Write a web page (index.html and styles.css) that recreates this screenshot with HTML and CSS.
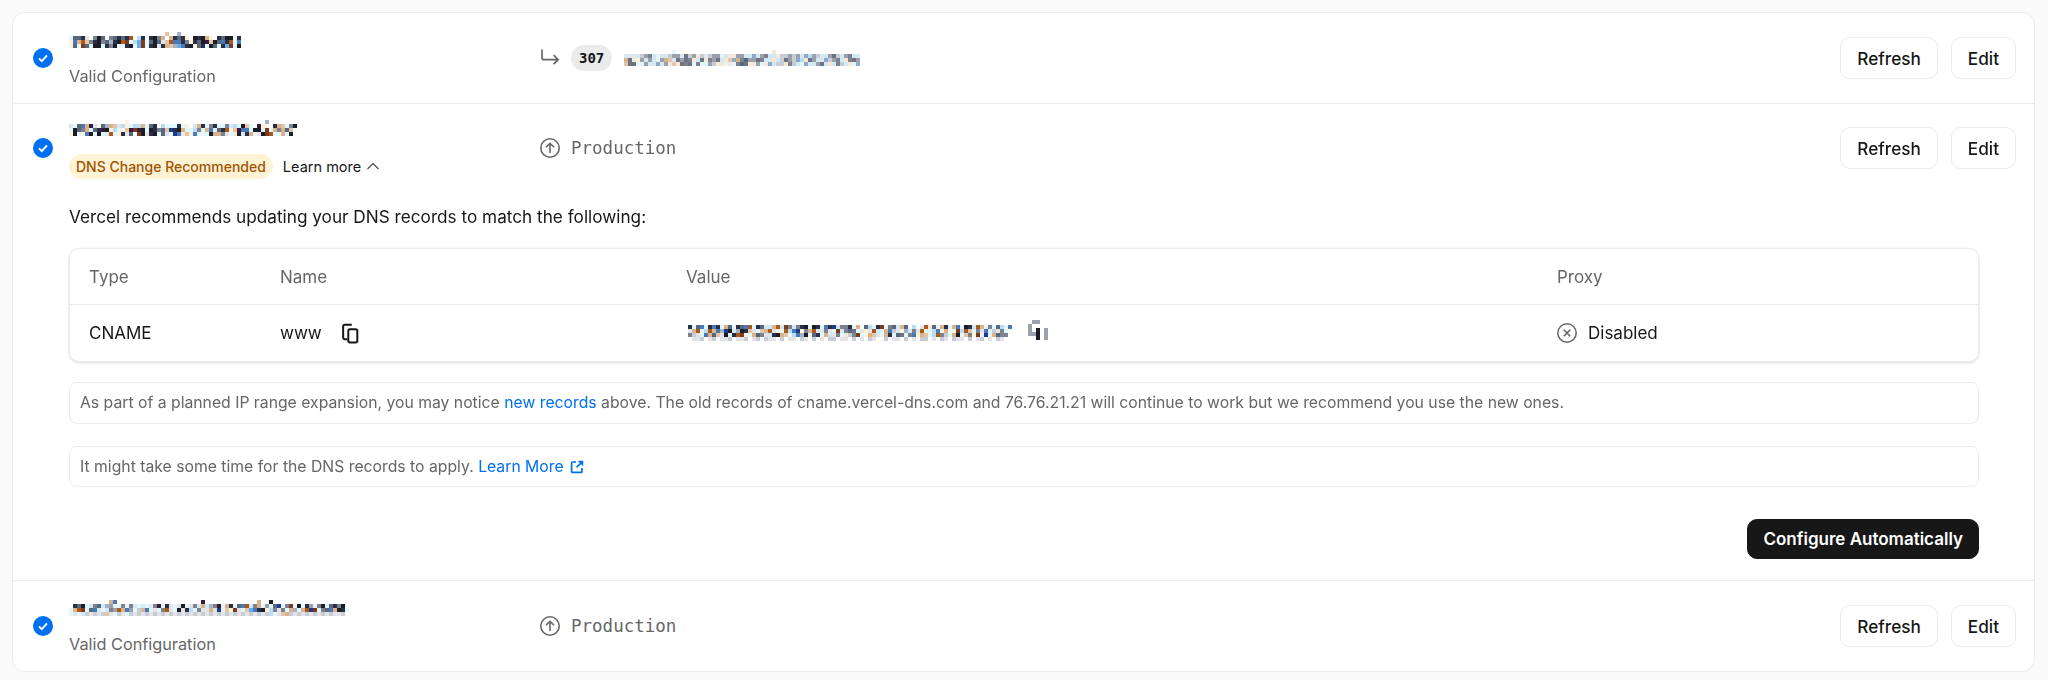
FILE: index.html
```html
<!DOCTYPE html>
<html lang="en">
  <head>
    <meta charset="UTF-8" />
    <title>Domains</title>
    <link rel="stylesheet" href="styles.css">
  </head>
  <body>
    <div class="card">
      <div class="row">
        <div class="row_head">
          <svg class="check" viewBox="0 0 20 20"><circle cx="10" cy="10" r="10" fill="#0070f3"/><path d="M6 10.4l2.8 2.7L14 7.4" fill="none" stroke="#fff" stroke-width="2"/></svg>
          <div class="domain">
            <canvas class="blur" data-rows="cssdp.gks.gsdsdo.ld.dkgt.tdsdy.kdkty.dskkcd|ybtoegdkgsxdkorclwrcskspeobbdgydskmeksbdocb|yscrsckkcdgkccdkcwrcdkpdtexwbdkysdckscdwrck" data-top="........................e..x"></canvas>
            <span class="sub">Valid Configuration</span>
          </div>
          <div class="target">
            <svg class="target_icon" viewBox="0 0 20 20"><path d="M2 1.5v8.2c0 1.3.8 2 2 2h14M13.6 7.2l4.6 4.5-4.6 4.5" fill="none" stroke="#666" stroke-width="1.7"/></svg>
            <span class="code">307</span>
            <canvas class="blur" data-rows="aapaihgacaaihhavihfipihhcaffhhaauahgaafiihihaulhiaahviahgaa|tvfyhahachteavhvgfavfghvafeutgshhvgaafaivhiulfvhaauihgafgvh|evvcchaauahfefvgvcgcchiffcfcgsvffhcfuaiifgiacuaahvafagiafcu" data-top="............c........................f"></canvas>
          </div>
          <div class="actions">
            <button type="button">Refresh</button>
            <button type="button">Edit</button>
          </div>
        </div>
      </div>

      <div class="row">
        <div class="row_head">
          <svg class="check" viewBox="0 0 20 20"><circle cx="10" cy="10" r="10" fill="#0070f3"/><path d="M6 10.4l2.8 2.7L14 7.4" fill="none" stroke="#fff" stroke-width="2"/></svg>
          <div class="domain">
            <canvas class="blur" data-rows="pcsbtmaysxtealyclltcsd.lcccdcy.atdcgdccgalckec.myy.dtecgk|cksgtcsdmkylcyemrmkckdgsendktcclgctbcsdoyembbckkcrctgtse.|ykcybkckcaocydps.rkpdkcspcnbfeybccckttgpcfkadtcpkrocctck." data-top="..............y..................................x"></canvas>
            <div class="status">
              <span class="badge">DNS Change Recommended</span>
              <span class="more">Learn more
                <svg class="chevron" viewBox="0 0 14 14"><path d="M1.5 10l5.5-5.5 5.5 5.5" fill="none" stroke="#444" stroke-width="1.1"/></svg>
              </span>
            </div>
          </div>
          <div class="target">
            <svg class="target_icon" viewBox="0 0 20 20"><circle cx="10" cy="10" r="9.2" fill="none" stroke="#666" stroke-width="1.6"/><path d="M10 15V5.5M6 9.3l4-4 4 4" fill="none" stroke="#666" stroke-width="1.6"/></svg>
            <span class="env">Production</span>
          </div>
          <div class="actions">
            <button type="button">Refresh</button>
            <button type="button">Edit</button>
          </div>
        </div>

        <div class="details">
          <p class="intro">Vercel recommends updating your DNS records to match the following:</p>
          <div class="records">
            <div class="records_row records_top">
              <span>Type</span>
              <span>Name</span>
              <span>Value</span>
              <span>Proxy</span>
            </div>
            <div class="records_row">
              <span>CNAME</span>
              <span class="with_icon">www
                <svg class="copy" viewBox="0 0 18 20"><path d="M6 15.5H3.6C2.7 15.5 2 14.8 2 13.9V3.2C2 2.3 2.7 1.6 3.6 1.6h6.6" fill="none" stroke="#171717" stroke-width="1.9"/><rect x="6.9" y="6" width="8.6" height="12.6" rx="1.6" fill="none" stroke="#171717" stroke-width="1.9"/></svg>
              </span>
              <span class="with_icon value_cell">
                <canvas class="blur" data-rows="dcsbcdbdctscdsbocdsaatoargagdkckdcbdnaggdct.slcdrcgsats.l.pofsctdctbckdaotcgcslcb|ptoclotbxnkaxkdepcetoaycolbnygtoapgpcragsvcpypoactbiayxagpocclbyt.crloecgpbcipgc|gipcbtsepkcdoryctsgpadkteclbxkcsdctapgcfigrcyteactdcsvcgbyteclogictkcegyrcnctsgg|.ppi.pi.ppi.ppi.pi.ipp.i.pp.ip.i.p.ii.pp.i.p.ip..i.pp.i.p.ii.p.ip.ipp.i.pi.p.ip"></canvas>
                <canvas class="blur blur_icon" data-rows=".hh..|h....|h.k.h|hhk.h|..k.h"></canvas>
              </span>
              <span class="with_icon proxy">
                <svg class="x_icon" viewBox="0 0 20 20"><circle cx="10" cy="10" r="9.2" fill="none" stroke="#666" stroke-width="1.5"/><path d="M6.8 6.8l6.4 6.4M13.2 6.8l-6.4 6.4" fill="none" stroke="#666" stroke-width="1.6"/></svg>
                Disabled
              </span>
            </div>
          </div>
          <div class="note">As part of a planned IP range expansion, you may notice <a href="#">new records</a> above. The old records of cname.vercel-dns.com and 76.76.21.21 will continue to work but we recommend you use the new ones.</div>
          <div class="note note_small">It might take some time for the DNS records to apply. <a href="#">Learn More<svg class="external" viewBox="0 0 14 14"><path d="M6 2H2.6C2 2 1.6 2.4 1.6 3v8.4c0 .6.4 1 1 1H11c.6 0 1-.4 1-1V8M8.4 1.6h4v4M12.2 1.8L6.6 7.4" fill="none" stroke="#0070f3" stroke-width="1.7"/></svg></a></div>
          <div class="configure">
            <button type="button" class="primary">Configure Automatically</button>
          </div>
        </div>
      </div>

      <div class="row">
        <div class="row_head">
          <svg class="check" viewBox="0 0 20 20"><circle cx="10" cy="10" r="10" fill="#0070f3"/><path d="M6 10.4l2.8 2.7L14 7.4" fill="none" stroke="#fff" stroke-width="2"/></svg>
          <div class="domain">
            <canvas class="blur" data-rows=".dskcagsaxhccgcgacacpgmcdpcpkcpgataxgmctdcsboagtchcsncgrckcdhcgkcsdgk|ctorcsbacaghotbhcitbcpcgopckpdlcgpptpnceyrpcewbdkylgpgctxctonrcgsbtkdc|cpcaipipiepcipcipipipipipipipipipipipipipipipipipilcpetipipipipipippi" data-top="..........tb.....................m.............t..k"></canvas>
            <span class="sub">Valid Configuration</span>
          </div>
          <div class="target">
            <svg class="target_icon" viewBox="0 0 20 20"><circle cx="10" cy="10" r="9.2" fill="none" stroke="#666" stroke-width="1.6"/><path d="M10 15V5.5M6 9.3l4-4 4 4" fill="none" stroke="#666" stroke-width="1.6"/></svg>
            <span class="env">Production</span>
          </div>
          <div class="actions">
            <button type="button">Refresh</button>
            <button type="button">Edit</button>
          </div>
        </div>
      </div>
    </div>

    <script>
      // the domain names in the screenshot are pixelated, so paint them as 4px blocks
      const colors = {
        d: "#2b2f45", k: "#1c1c24", b: "#4c78b8", l: "#bcdcf4", c: "#e2f6fb",
        t: "#d9b48a", o: "#a85a1c", r: "#7c3a20", g: "#7d8291", s: "#56677e",
        y: "#fdf3dc", p: "#e4e4e8", n: "#1e3a8a", m: "#3a1a3a", w: "#6aaee8",
        x: "#a4b2c8", e: "#e6c4a8", h: "#9aa0ac", i: "#c8ccd4", a: "#d4e8f4",
        u: "#8fa8cc", f: "#f4e8d8", v: "#6f7480",
      };
      document.querySelectorAll(".blur").forEach((canvas) => {
        let rows = canvas.dataset.rows.split("|");
        if (canvas.dataset.top) rows.unshift(canvas.dataset.top);
        canvas.width = Math.max(...rows.map((r) => r.length)) * 4;
        canvas.height = rows.length * 4;
        let ctx = canvas.getContext("2d");
        rows.forEach((row, y) => {
          [...row].forEach((ch, x) => {
            if (!colors[ch]) return;
            ctx.fillStyle = colors[ch];
            ctx.fillRect(x * 4, y * 4, 4, 4);
          });
        });
      });
    </script>
  </body>
</html>
```

FILE: styles.css
```css
* {
  box-sizing: border-box;
  padding: 0;
  margin: 0;
  font-family: Inter, "Liberation Sans", sans-serif;
}
body {
  background-color: #fafafa;
  color: #171717;
  padding: 12px 13px 0 12px;
}
.card {
  background-color: #fff;
  border: 1px solid #ebebeb;
  border-radius: 13px;
}
.row {
  border-bottom: 1px solid #ebebeb;
}
.row:last-child {
  border-bottom: none;
}
.row_head {
  display: flex;
  align-items: center;
  height: 90px;
  padding: 0 18px 0 20px;
}
.row:nth-child(2) .row_head {
  height: 88px;
}
.check {
  width: 20px;
  height: 20px;
  flex-shrink: 0;
  margin-right: 16px;
}
.domain {
  width: 471px;
  display: flex;
  flex-direction: column;
  align-items: flex-start;
  gap: 18px;
  padding-top: 2px;
}
.blur {
  display: block;
}
.sub {
  font-size: 16.3px;
  line-height: 20px;
  color: #666;
}
.status {
  display: flex;
  align-items: center;
  gap: 10px;
}
.badge {
  background-color: #fff3d6;
  color: #a35200;
  font-size: 14px;
  font-weight: 500;
  line-height: 25px;
  padding: 0 7px;
  border-radius: 13px;
  white-space: nowrap;
}
.more {
  font-size: 14.5px;
  display: flex;
  align-items: center;
  gap: 5px;
}
.chevron {
  width: 14px;
  height: 14px;
}
.target {
  flex: 1;
  display: flex;
  align-items: center;
  gap: 11px;
}
.target_icon {
  width: 20px;
  height: 20px;
}
.code {
  font-family: "DejaVu Sans Mono", monospace;
  font-size: 14px;
  font-weight: 700;
  line-height: 26px;
  padding: 0 8px;
  background-color: #ebebeb;
  border-radius: 13px;
  margin-right: 1px;
}
.env {
  font-family: "DejaVu Sans Mono", monospace;
  font-size: 17.5px;
  color: #666;
}
.actions {
  display: flex;
  gap: 13px;
}
button {
  height: 42px;
  padding: 0 16px;
  background-color: #fff;
  border: 1px solid #ebebeb;
  border-radius: 10px;
  color: #171717;
  font-size: 17.2px;
  font-weight: 500;
  cursor: pointer;
}
.details {
  padding: 13px 55px 21px 56px;
}
.intro {
  font-size: 17.2px;
  line-height: 24px;
  margin-bottom: 19px;
}
.records {
  border: 1px solid #ebebeb;
  border-radius: 10px;
  box-shadow: 0 1px 3px rgba(0, 0, 0, 0.14);
  font-size: 17px;
  margin-bottom: 20px;
}
.records_row {
  display: grid;
  grid-template-columns: 191px 406px 871px 1fr;
  align-items: center;
  height: 56px;
  padding-left: 19px;
}
.records_top {
  color: #666;
  border-bottom: 1px solid #ebebeb;
}
.with_icon {
  display: flex;
  align-items: center;
}
.value_cell {
  gap: 16px;
  padding-left: 2px;
}
.blur_icon {
  margin-bottom: 6px;
}
.copy {
  width: 19px;
  height: 21px;
  margin-left: 19px;
}
.proxy {
  gap: 11px;
}
.x_icon {
  width: 20px;
  height: 20px;
}
.note {
  line-height: 40px;
  padding: 0 10px;
  border: 1px solid #ebebeb;
  border-radius: 8px;
  font-size: 15.75px;
  color: #666;
  margin-bottom: 22px;
}
.note_small {
  line-height: 39px;
  margin-bottom: 32px;
}
.note a {
  color: #0070f3;
  text-decoration: none;
}
.external {
  width: 14px;
  height: 14px;
  vertical-align: -2px;
  margin-left: 6px;
}
.configure {
  display: flex;
  justify-content: flex-end;
}
.primary {
  height: 40px;
  padding: 0 15px;
  background-color: #171717;
  border-color: #171717;
  color: #fff;
  font-size: 17px;
  font-weight: 600;
}
```
